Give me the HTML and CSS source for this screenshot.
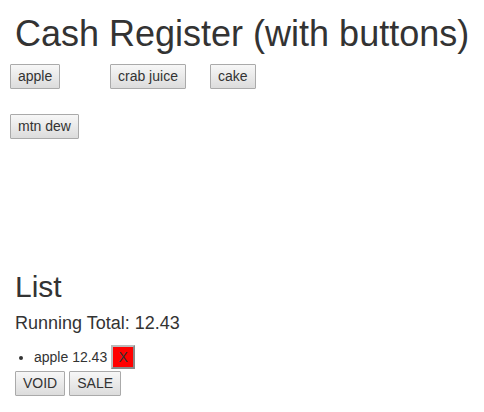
FILE: index.html
```html
<!DOCTYPE html>
<html>
<head>
<meta charset="utf-8">
<link rel="stylesheet" href="styles.css">
</head>
<body>
<h1 class="title">Cash Register (with buttons)</h1>
<div class="pad">
  <div class="cell"><button class="btn">apple</button></div>
  <div class="cell"><button class="btn">crab juice</button></div>
  <div class="cell"><button class="btn">cake</button></div>
  <div class="cell"><button class="btn">mtn dew</button></div>
</div>
<h2 class="list-title">List</h2>
<div class="total">Running Total: 12.43</div>
<ul class="items">
  <li><span class="item-text">apple 12.43</span><button class="remove">X</button></li>
</ul>
<div class="actions"><button class="btn">VOID</button><button class="btn">SALE</button></div>
</body>
</html>
```
FILE: styles.css
```css
body {
  margin: 8px;
  font-family: "Liberation Sans", Arial, sans-serif;
  color: #333;
}
.title {
  font-size: 36px;
  font-weight: normal;
  line-height: 41px;
  margin: 5px 0 10px 7px;
}
.pad {
  margin-left: 2px;
  display: grid;
  grid-template-columns: repeat(3, 100px);
  grid-auto-rows: 50px;
  height: 206px;
  align-content: start;
}
.btn {
  font-family: "Liberation Sans", Arial, sans-serif;
  font-size: 14px;
  line-height: 15px;
  color: #333;
  padding: 4px 7px;
  border: 1px solid #aaa;
  border-radius: 1px;
  background: linear-gradient(#f7f7f7, #dcdcdc);
  margin: 0;
}
.cell { display: block; }
.list-title {
  font-size: 30px;
  font-weight: normal;
  line-height: 34px;
  margin: 0 0 0 7px;
}
.total {
  font-size: 18px;
  line-height: 21px;
  margin: 9px 0 0 7px;
}
.items {
  margin: 11px 0 0 7px;
  padding-left: 19px;
  font-size: 14px;
  line-height: 24px;
}
.items li {
  height: 24px;
}
.item-text {
  margin-right: 4px;
}
.remove {
  font-family: "Liberation Sans", Arial, sans-serif;
  font-size: 14px;
  line-height: 20px;
  width: 24px;
  height: 24px;
  color: #333;
  background: #ff0000;
  border: 2px solid;
  border-color: #bbb #888 #888 #bbb;
  padding: 0;
  margin: 0;
  vertical-align: top;
}
.actions {
  margin: 2px 0 0 7px;
  display: flex;
  gap: 4px;
}
```
